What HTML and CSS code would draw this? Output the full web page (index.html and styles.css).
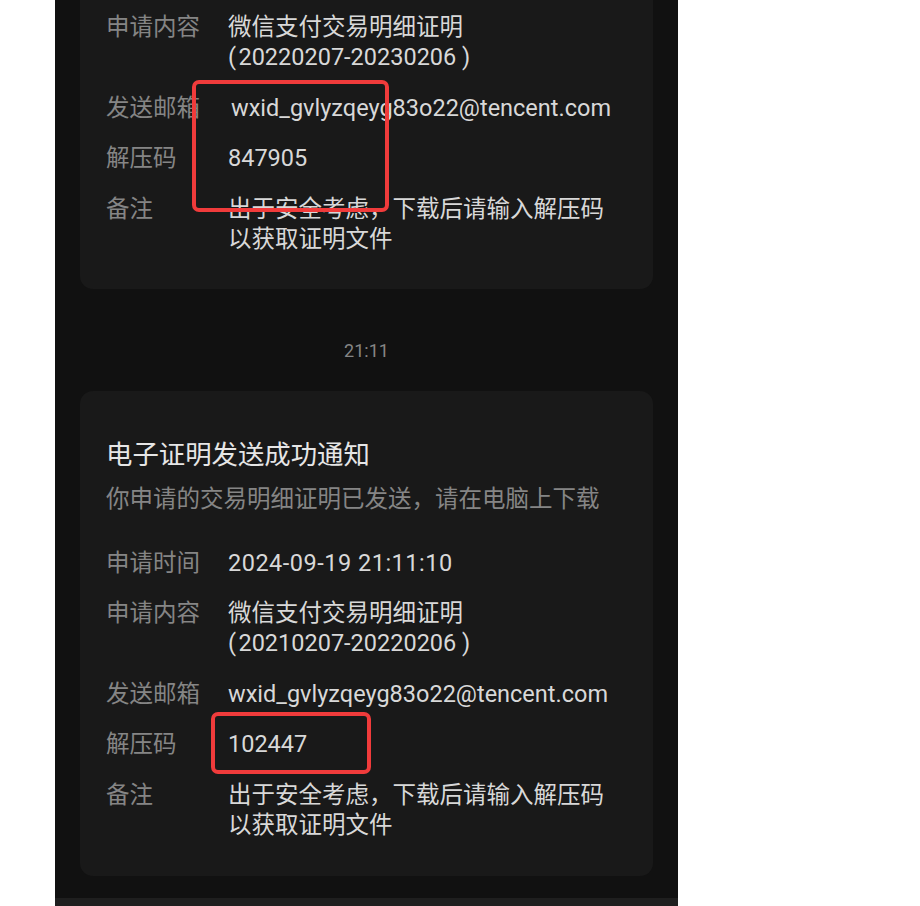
FILE: index.html
```html
<!DOCTYPE html>
<html lang="zh-CN">
<head>
  <meta charset="UTF-8" />
  <meta name="viewport" content="width=device-width, initial-scale=1.0" />
  <title>电子证明发送成功通知</title>
  <link rel="stylesheet" href="styles.css">
</head>
<body>
  <div class="screen">
    <div class="card cut">
      <div class="row">
        <div class="label">申请内容</div>
        <div class="value">微信支付交易明细证明<br>(&#8202;20220207-20230206 )</div>
      </div>
      <div class="row">
        <div class="label">发送邮箱</div>
        <div class="value shift">wxid_gvlyzqeyg83o22@tencent.com</div>
      </div>
      <div class="row">
        <div class="label">解压码</div>
        <div class="value">847905</div>
      </div>
      <div class="row">
        <div class="label">备注</div>
        <div class="value">出于安全考虑，下载后请输入解压码<br>以获取证明文件</div>
      </div>
      <div class="mark mark-one"></div>
    </div>

    <div class="time">21:11</div>

    <div class="card">
      <div class="title">电子证明发送成功通知</div>
      <div class="desc">你申请的交易明细证明已发送，请在电脑上下载</div>
      <div class="row first">
        <div class="label">申请时间</div>
        <div class="value date">2024-09-19 21:11:10</div>
      </div>
      <div class="row">
        <div class="label">申请内容</div>
        <div class="value">微信支付交易明细证明<br>(&#8202;20210207-20220206 )</div>
      </div>
      <div class="row">
        <div class="label">发送邮箱</div>
        <div class="value">wxid_gvlyzqeyg83o22@tencent.com</div>
      </div>
      <div class="row">
        <div class="label">解压码</div>
        <div class="value">102447</div>
      </div>
      <div class="row">
        <div class="label">备注</div>
        <div class="value">出于安全考虑，下载后请输入解压码<br>以获取证明文件</div>
      </div>
      <div class="mark mark-two"></div>
    </div>

    <div class="bottom-bar"></div>
  </div>
</body>
</html>
```

FILE: styles.css
```css
* {
  box-sizing: border-box;
}
body {
  margin: 0;
  background: #fff;
  height: 906px;
  overflow: hidden;
  font-family: Roboto, 'Noto Sans CJK SC', sans-serif;
}
.screen {
  margin-left: 55px;
  width: 623px;
  height: 906px;
  background: #111111;
  padding: 0 25px;
  overflow: hidden;
}
.card {
  position: relative;
  background: #191919;
  border-radius: 13px;
  padding: 46px 26px 36px;
}
.card.cut {
  border-radius: 0 0 13px 13px;
  padding-top: 12px;
  padding-bottom: 35px;
}
.title {
  font-size: 26.4px;
  line-height: 36px;
  color: #e6e6e6;
}
.desc {
  margin-top: 11px;
  font-size: 23.5px;
  line-height: 30px;
  color: #858585;
}
.row {
  display: flex;
  font-size: 23.5px;
  line-height: 30px;
  margin-top: 20.5px;
}
.card.cut .row:first-child {
  margin-top: 0;
}
.row.first {
  margin-top: 34px;
}
.label {
  width: 122px;
  flex-shrink: 0;
  color: #858585;
}
.value {
  color: #d8d8d8;
  white-space: pre;
}
.value.shift {
  padding-left: 3px;
}
.value.date {
  letter-spacing: 0.5px;
}
.time {
  margin: 50px 0 28px;
  text-align: center;
  font-size: 18px;
  line-height: 24px;
  color: #858585;
}
.mark {
  position: absolute;
  border: 4px solid #f03b3b;
  border-radius: 7px;
}
.mark-one {
  left: 112px;
  top: 80px;
  width: 197px;
  height: 132px;
}
.mark-two {
  left: 131px;
  top: 321px;
  width: 160px;
  height: 62px;
}
.bottom-bar {
  margin: 22px -25px 0;
  height: 10px;
  background: #1f1f1f;
}
```
